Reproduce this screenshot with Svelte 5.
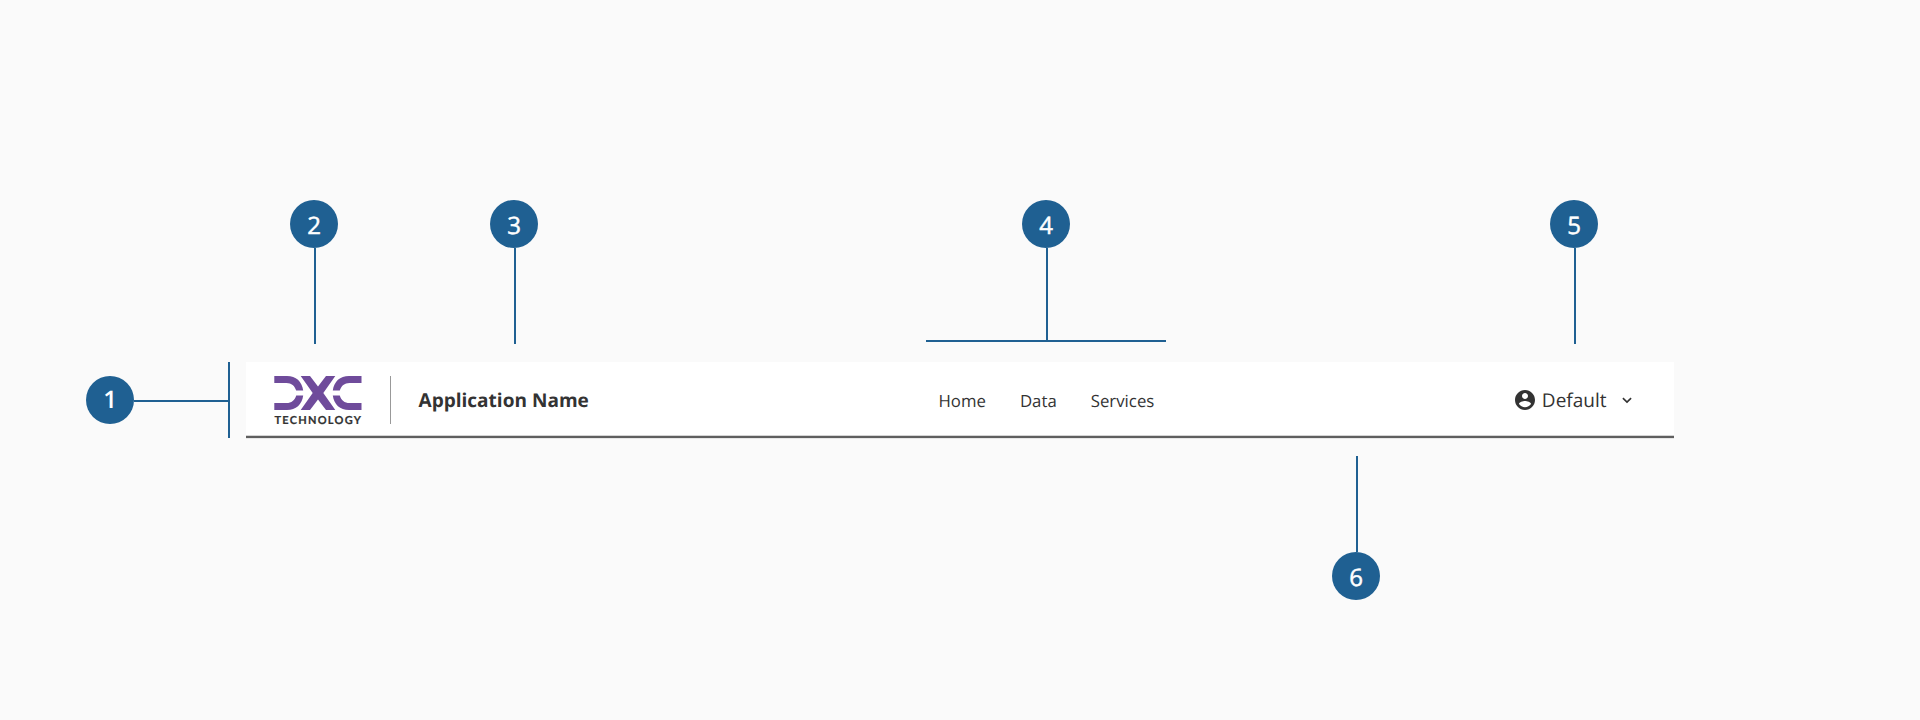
<script>
  const callouts = [
    { n: 2, x: 290, y: 200, line: [314, 248, 2, 96] },
    { n: 3, x: 490, y: 200, line: [514, 248, 2, 96] },
    { n: 4, x: 1022, y: 200, line: [1046, 248, 2, 92], bar: [926, 340, 240, 2] },
    { n: 5, x: 1550, y: 200, line: [1574, 248, 2, 96] },
    { n: 1, x: 86, y: 376, line: [134, 400, 94, 2], bar: [228, 362, 2, 76] },
    { n: 6, x: 1332, y: 552, line: [1356, 456, 2, 96] },
  ];
  const links = ['Home', 'Data', 'Services'];
  const box = ([x, y, w, h]) => `left:${x}px;top:${y}px;width:${w}px;height:${h}px`;
</script>

<main>
  <header>
    <div class="brand">
      <svg class="logo" width="88" height="50" viewBox="274 376 88 50" aria-label="DXC Technology">
        <g fill="#6f4b9b">
          <path d="M274.300 376.100H287C296 376.100 302 381.500 303.200 390.600H296.200C294.800 385.800 291.500 383 286.500 383H274.300Z" />
          <path d="M274.300 410H287C296 410 302 404.600 303.200 395.500H296.200C294.800 400.300 291.500 403.100 286.500 403.100H274.300Z" />
          <path d="M361.500 376.100H349C340 376.100 334 381.500 332.800 390.600H339.800C341.200 385.800 344.500 383 349.500 383H361.500Z" />
          <path d="M361.500 410H349C340 410 334 404.600 332.800 395.500H339.800C341.200 400.300 344.500 403.100 349.500 403.100H361.500Z" />
          <path d="M300.700 376.100H310L318 386.600L326 376.100H335.300L323.300 393L335.300 410H326L318 399.500L310 410H300.700L312.700 393Z" />
        </g>
        <text x="274.400" y="424" textLength="86.500" lengthAdjust="spacing">TECHNOLOGY</text>
      </svg>
      <span class="divider"></span>
      <strong>Application Name</strong>
    </div>
    <nav>
      {#each links as link}<span>{link}</span>{/each}
    </nav>
    <div class="user">
      <svg width="24" height="24" viewBox="0 0 24 24" fill="#333"><path d="M12 2C6.480 2 2 6.480 2 12s4.480 10 10 10 10-4.480 10-10S17.520 2 12 2zm0 3c1.660 0 3 1.340 3 3s-1.340 3-3 3-3-1.340-3-3 1.340-3 3-3zm0 14.200c-2.500 0-4.710-1.280-6-3.220.03-1.990 4-3.080 6-3.080 1.990 0 5.970 1.090 6 3.080-1.290 1.940-3.500 3.220-6 3.220z" /></svg>
      <span>Default</span>
      <svg class="chevron" width="10" height="7" viewBox="0 0 10 7"><path d="M.900 1.100L5 5.100L9.100 1.100" fill="none" stroke="#333" stroke-width="1.600" /></svg>
    </div>
  </header>

  {#each callouts as c}
    <i class="line" style={box(c.line)}></i>
    {#if c.bar}<i class="line" style={box(c.bar)}></i>{/if}
    <b class="badge" class:raised={c.n === 1} style="left:{c.x}px;top:{c.y}px">{c.n}</b>
  {/each}
</main>

<style>
  :global(body) { background: #fafafa; }
  main {
    position: relative;
    box-sizing: border-box;
    height: 720px;
    padding: 362px 246px 0;
    overflow: hidden;
    background: #fafafa;
    color: #333;
    font-family: "Open Sans", sans-serif;
    text-rendering: geometricPrecision;
  }
  header {
    box-sizing: border-box;
    display: grid;
    grid-template-columns: 692.500px 1fr auto;
    height: 76px;
    padding: 0 42.500px 0 28px;
    border-bottom: 2px solid #5f5f5f;
    background: #fff;
    box-shadow: inset 0 -1px #d4d4d4, 0 1px #e6e6e6;
  }
  .brand { display: flex; align-items: center; height: 76px; }
  .logo { margin-top: 2px; overflow: visible; }
  .logo text { font: 700 11px Lato, "Open Sans", sans-serif; fill: #333; stroke: #333; stroke-width: 0.200px; }
  .divider { width: 1px; height: 48px; margin: 0 28px; background: #999; }
  strong { margin-left: -0.500px; font-size: 19.050px; line-height: 26px; }
  nav { display: flex; align-items: center; gap: 34px; height: 77px; margin-left: -28px; font-size: 16.800px; line-height: 22px; }
  .user { display: flex; align-items: center; height: 76px; font-size: 19px; }
  .user span { margin-left: 4.500px; }
  .chevron { margin-left: 15px; }
  .line { position: absolute; background: #1f6092; }
  .badge {
    position: absolute;
    width: 48px;
    height: 48px;
    border-radius: 50%;
    background: #1f6092;
    color: #fff;
    font-size: 24px;
    font-weight: 400;
    line-height: 52px;
    text-align: center;
    -webkit-text-stroke: 0.500px #fff;
  }
  .raised { font-weight: 600; line-height: 47px; -webkit-text-stroke: 0; }
</style>
